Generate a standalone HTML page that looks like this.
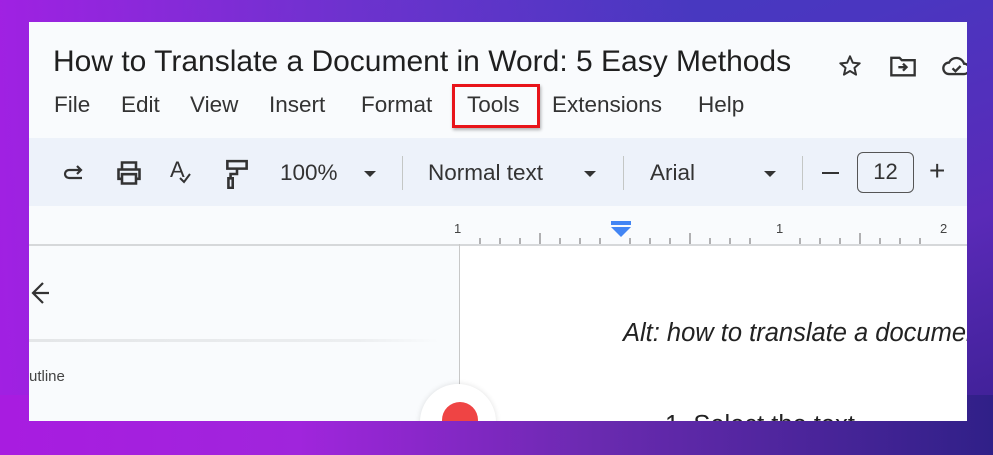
<!DOCTYPE html>
<html><head><style>
*{margin:0;padding:0;box-sizing:border-box}
body{width:993px;height:455px;overflow:hidden;position:relative;font-family:"Liberation Sans",Arial,sans-serif;
background:linear-gradient(160deg,#4040c0 0%,#4a36c0 40%,#5a2ab8 70%,#3a1f90 100%);}
.bg2{position:absolute;inset:0;background:linear-gradient(90deg,rgba(170,30,230,.9) 0%,rgba(150,40,220,.5) 35%,rgba(40,30,130,0) 70%);}
.bg3{position:absolute;left:0;right:0;bottom:0;height:60px;background:linear-gradient(90deg,#a81ce0 0%,#a025dc 30%,#6a2ab0 60%,#302088 100%);}
.win{position:absolute;left:29px;top:22px;width:938px;height:399px;background:#f9fbfd;overflow:hidden}
.t{position:absolute;color:#202124;white-space:nowrap}
.m{position:absolute;top:70px;font-size:22.5px;color:#333;white-space:nowrap}
.ic{position:absolute}
</style></head><body>
<div class="bg2"></div><div class="bg3"></div>
<div class="win">
 <div class="t" style="left:24px;top:23px;font-size:30px;color:#1f1f1f">How to Translate a Document in Word: 5 Easy Methods</div>
 <svg class="ic" style="left:808px;top:31px" width="26" height="26" viewBox="0 0 24 24"><path d="M12 3l2.6 6 6.4.5-4.9 4.2 1.5 6.3L12 16.6 6.4 20l1.5-6.3L3 9.5 9.4 9z" fill="none" stroke="#333" stroke-width="1.8" stroke-linejoin="round"/></svg>
 <svg class="ic" style="left:860px;top:31px" width="28" height="26" viewBox="0 0 24 22"><path d="M2 4h7l2 2h11v13H2z" fill="none" stroke="#333" stroke-width="2"/><path d="M8 12h7M12 9l3 3-3 3" fill="none" stroke="#333" stroke-width="2"/></svg>
 <svg class="ic" style="left:912px;top:31px" width="30" height="26" viewBox="0 0 26 22"><path d="M7 18a5 5 0 010-10 7 7 0 0113 1 4.5 4.5 0 010 9z" fill="none" stroke="#333" stroke-width="2"/><path d="M10 13l2.5 2.5L17 11" fill="none" stroke="#333" stroke-width="2"/></svg>
 <div class="m" style="left:25px">File</div>
 <div class="m" style="left:92px">Edit</div>
 <div class="m" style="left:161px">View</div>
 <div class="m" style="left:240px">Insert</div>
 <div class="m" style="left:332px">Format</div>
 <div class="m" style="left:438px">Tools</div>
 <div style="position:absolute;left:423px;top:62px;width:88px;height:44px;border:3px solid #e8141a;box-shadow:1px 2px 3px rgba(0,0,0,.3)"></div>
 <div class="m" style="left:523px">Extensions</div>
 <div class="m" style="left:669px">Help</div>
 <div style="position:absolute;left:0;top:116px;width:938px;height:68px;background:#edf2fa"></div>
 <svg class="ic" style="left:33px;top:140px" width="24" height="22" viewBox="0 0 24 22"><path d="M20 16H7a4 4 0 010-8h11M15 4l4 4-4 4" fill="none" stroke="#333" stroke-width="2.2"/></svg>
 <svg class="ic" style="left:86px;top:138px" width="28" height="26" viewBox="0 0 24 22"><path d="M6 7V2h12v5M6 16H3V8h18v8h-3M6 12h12v8H6z" fill="none" stroke="#333" stroke-width="2.2"/></svg>
 <div class="t" style="left:141px;top:135px;font-size:22px;color:#333">A</div>
 <svg class="ic" style="left:148px;top:150px" width="16" height="14" viewBox="0 0 16 14"><path d="M3 6l4 4 6-8" fill="none" stroke="#333" stroke-width="2"/></svg>
 <svg class="ic" style="left:195px;top:137px" width="26" height="30" viewBox="0 0 24 28"><path d="M3 2h18v7H3zM12 9v5H6v4M4 18h4v9H4z" fill="none" stroke="#333" stroke-width="2.4"/></svg>
 <div class="t" style="left:251px;top:138px;font-size:22.5px;color:#333">100%</div>
 <div style="position:absolute;left:335px;top:149px;border:6px solid transparent;border-top-color:#333;border-bottom:0"></div>
 <div style="position:absolute;left:373px;top:134px;width:1px;height:34px;background:#c4c7c5"></div>
 <div class="t" style="left:399px;top:138px;font-size:22.5px;color:#333">Normal text</div>
 <div style="position:absolute;left:555px;top:149px;border:6px solid transparent;border-top-color:#333;border-bottom:0"></div>
 <div style="position:absolute;left:594px;top:134px;width:1px;height:34px;background:#c4c7c5"></div>
 <div class="t" style="left:621px;top:138px;font-size:22.5px;color:#333">Arial</div>
 <div style="position:absolute;left:735px;top:149px;border:6px solid transparent;border-top-color:#333;border-bottom:0"></div>
 <div style="position:absolute;left:773px;top:134px;width:1px;height:34px;background:#c4c7c5"></div>
 <div style="position:absolute;left:793px;top:150px;width:17px;height:2px;background:#333"></div>
 <div style="position:absolute;left:828px;top:130px;width:57px;height:41px;border:1.5px solid #555;border-radius:6px;font-size:22px;color:#333;text-align:center;line-height:38px">12</div>
 <div class="t" style="left:900px;top:133px;font-size:28px;color:#333">+</div>
 <div style="position:absolute;left:0;top:184px;width:938px;height:39px;background:#f9fbfd"></div>
 <div style="position:absolute;left:0;top:222px;width:938px;height:2px;background:#d6d8da"></div>
 <div style="position:absolute;left:430px;top:224px;width:508px;height:175px;background:#fff"></div>
 <div style="position:absolute;left:430px;top:222px;width:1px;height:158px;background:#c8c8c8"></div>
 <svg class="ic" style="left:425px;top:198px" width="513" height="26">
  <text x="0" y="13" font-size="13" fill="#444" font-family="Liberation Sans">1</text>
  <text x="322" y="13" font-size="13" fill="#444" font-family="Liberation Sans">1</text>
  <text x="486" y="13" font-size="13" fill="#444" font-family="Liberation Sans">2</text>
  <g stroke="#666" stroke-width="1">
   <line x1="26" y1="18" x2="26" y2="24"/><line x1="46" y1="18" x2="46" y2="24"/><line x1="66" y1="18" x2="66" y2="24"/><line x1="86" y1="13" x2="86" y2="24"/><line x1="106" y1="18" x2="106" y2="24"/><line x1="126" y1="18" x2="126" y2="24"/><line x1="146" y1="18" x2="146" y2="24"/><line x1="176" y1="18" x2="176" y2="24"/><line x1="196" y1="18" x2="196" y2="24"/><line x1="216" y1="18" x2="216" y2="24"/><line x1="236" y1="13" x2="236" y2="24"/><line x1="256" y1="18" x2="256" y2="24"/><line x1="276" y1="18" x2="276" y2="24"/><line x1="296" y1="18" x2="296" y2="24"/><line x1="346" y1="18" x2="346" y2="24"/><line x1="366" y1="18" x2="366" y2="24"/><line x1="386" y1="18" x2="386" y2="24"/><line x1="406" y1="13" x2="406" y2="24"/><line x1="426" y1="18" x2="426" y2="24"/><line x1="446" y1="18" x2="446" y2="24"/><line x1="466" y1="18" x2="466" y2="24"/>
  </g>
  <rect x="157" y="1" width="20" height="4" fill="#4285f4"/><path d="M157 7h20l-10 10z" fill="#4285f4"/>
 </svg>
 <svg class="ic" style="left:0;top:258px" width="22" height="26" viewBox="0 0 22 26"><path d="M20 13H4M14 3L4 13l10 10" fill="none" stroke="#333" stroke-width="2.2"/></svg>
 <div style="position:absolute;left:0;top:317px;width:410px;height:3px;background:linear-gradient(90deg,#e4e6e8,#eceef0 80%,rgba(236,238,240,0))"></div>
 <div class="t" style="left:0;top:346px;font-size:15px;color:#444">utline</div>
 <div style="position:absolute;left:391px;top:362px;width:76px;height:76px;border-radius:50%;background:#fff;box-shadow:0 0 6px rgba(0,0,0,.12)"></div>
 <div style="position:absolute;left:413px;top:380px;width:36px;height:36px;border-radius:50%;background:#ef4444"></div>
 <div class="t" style="left:594px;top:297px;font-size:25.5px;font-style:italic;color:#222">Alt: how to translate a document</div>
 <div class="t" style="left:636px;top:389px;font-size:25.5px;color:#222">1. Select the text</div>
</div>
</body></html>
